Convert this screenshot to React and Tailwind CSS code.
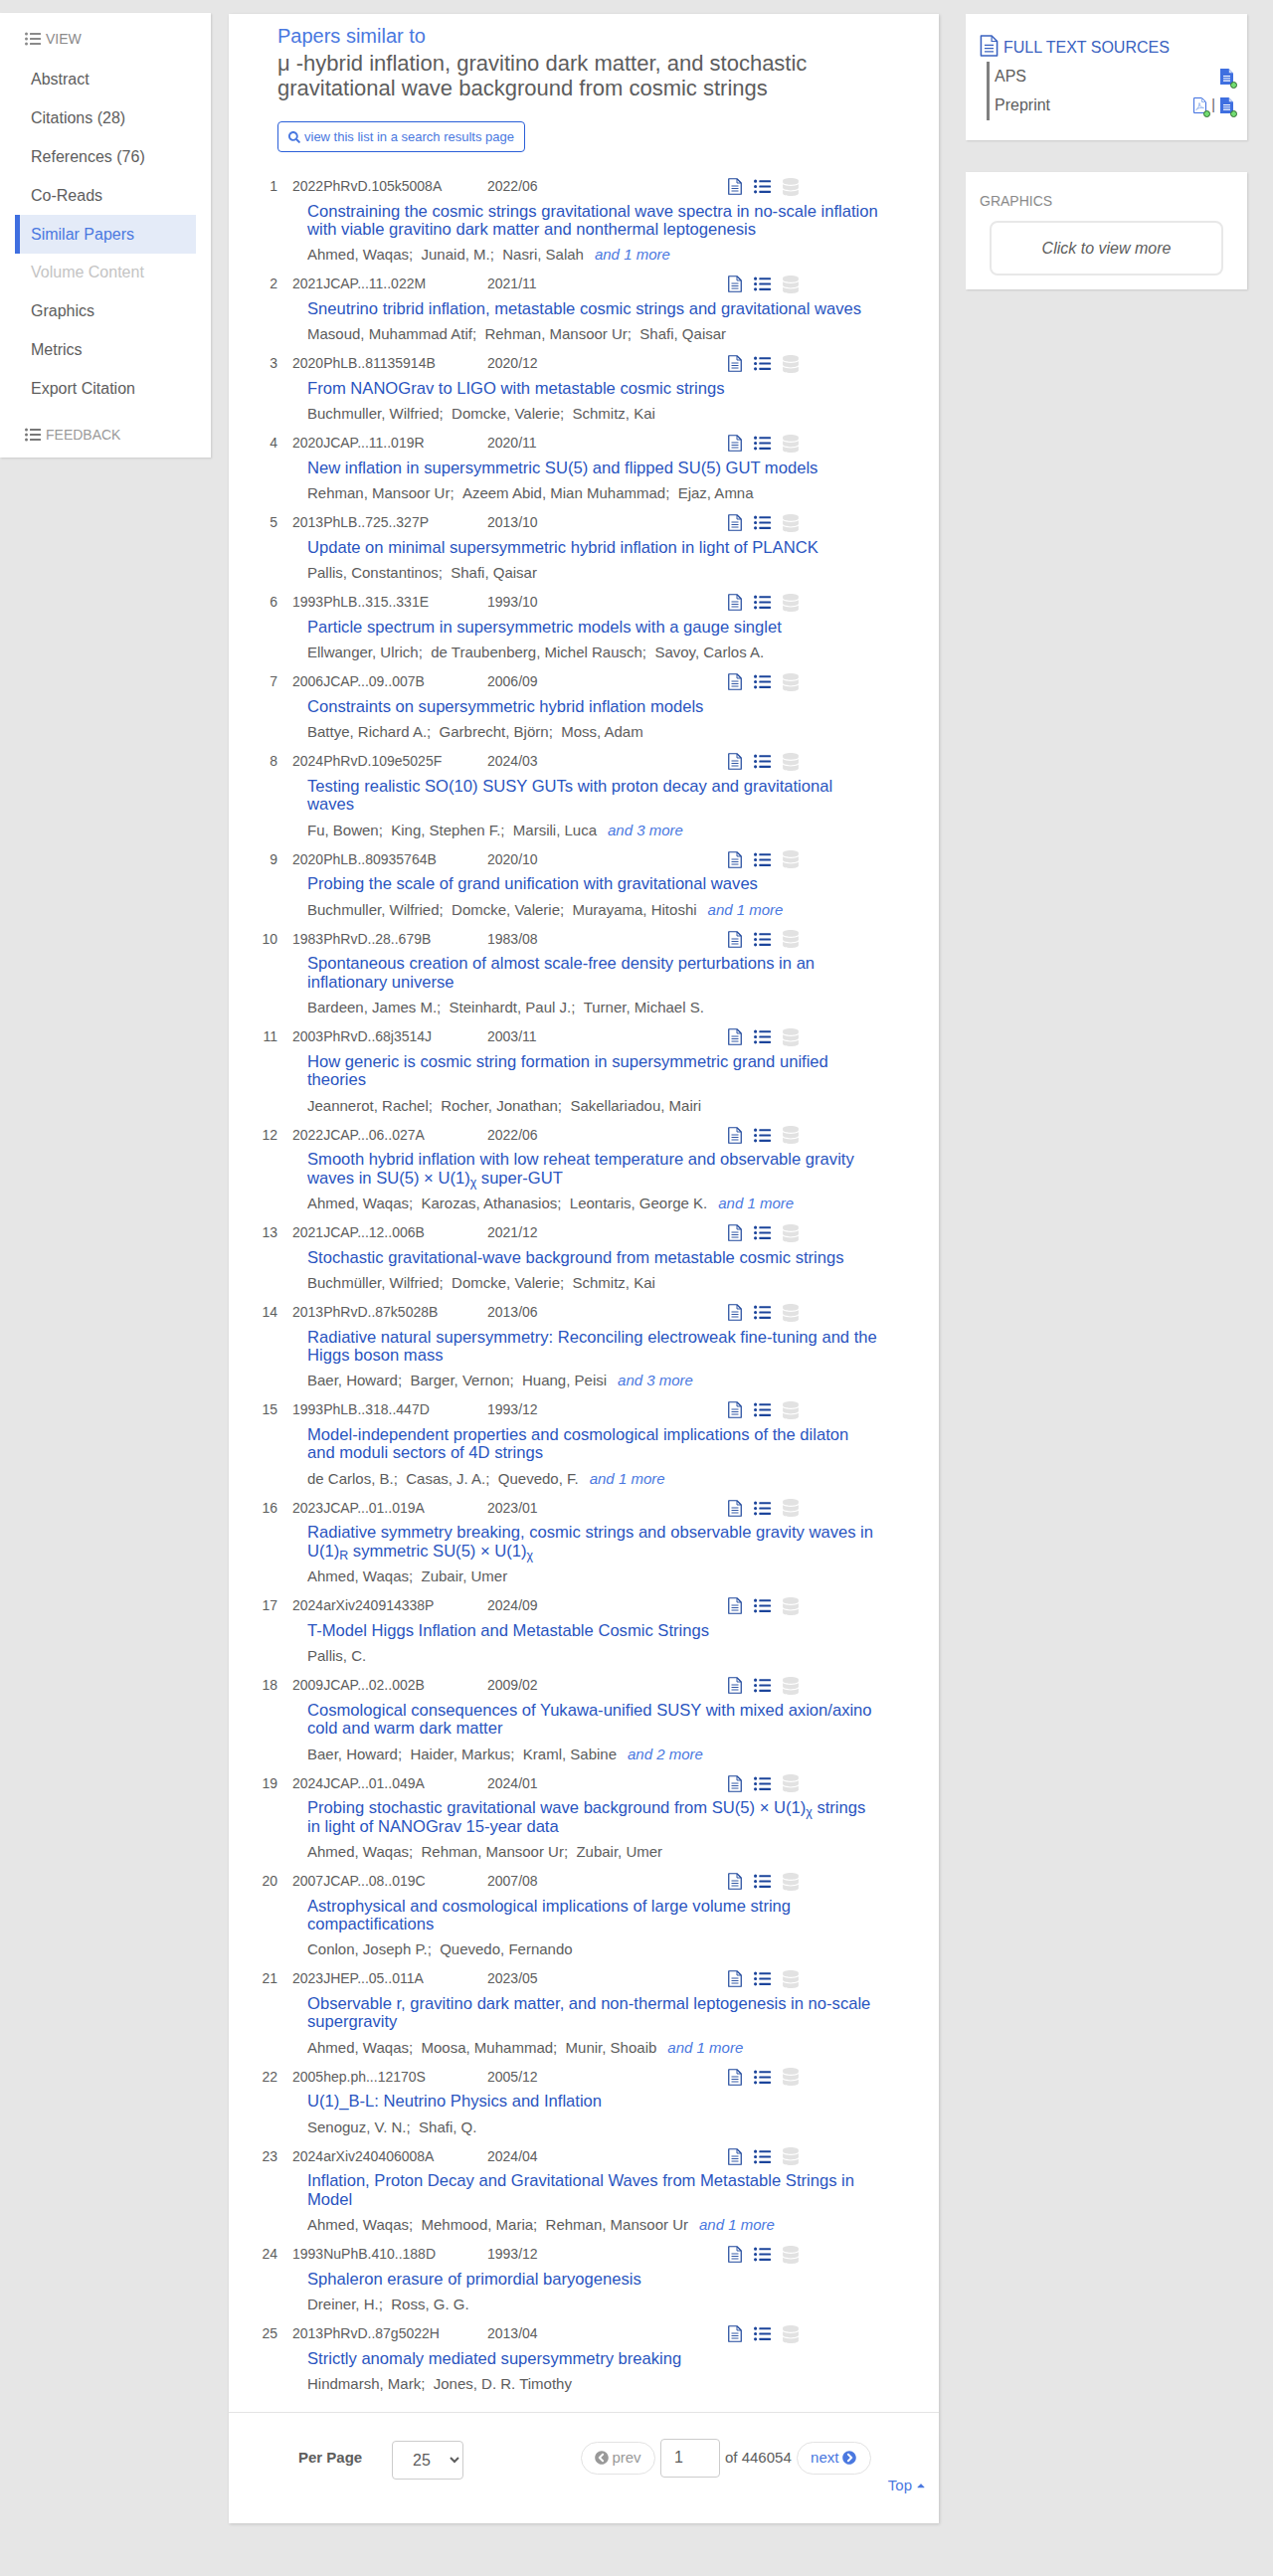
import { FaCaretUp, FaChevronCircleLeft, FaChevronCircleRight, FaDatabase, FaListUl, FaSearch } from "react-icons/fa";

const navItems = ["Abstract", "Citations (28)", "References (76)", "Co-Reads", "Similar Papers", "Volume Content", "Graphics", "Metrics", "Export Citation"];

const papers = [
  ["2022PhRvD.105k5008A", "2022/06", "Constraining the cosmic strings gravitational wave spectra in no-scale inflation with viable gravitino dark matter and nonthermal leptogenesis", ["Ahmed, Waqas", "Junaid, M.", "Nasri, Salah"], 1],
  ["2021JCAP...11..022M", "2021/11", "Sneutrino tribrid inflation, metastable cosmic strings and gravitational waves", ["Masoud, Muhammad Atif", "Rehman, Mansoor Ur", "Shafi, Qaisar"]],
  ["2020PhLB..81135914B", "2020/12", "From NANOGrav to LIGO with metastable cosmic strings", ["Buchmuller, Wilfried", "Domcke, Valerie", "Schmitz, Kai"]],
  ["2020JCAP...11..019R", "2020/11", "New inflation in supersymmetric SU(5) and flipped SU(5) GUT models", ["Rehman, Mansoor Ur", "Azeem Abid, Mian Muhammad", "Ejaz, Amna"]],
  ["2013PhLB..725..327P", "2013/10", "Update on minimal supersymmetric hybrid inflation in light of PLANCK", ["Pallis, Constantinos", "Shafi, Qaisar"]],
  ["1993PhLB..315..331E", "1993/10", "Particle spectrum in supersymmetric models with a gauge singlet", ["Ellwanger, Ulrich", "de Traubenberg, Michel Rausch", "Savoy, Carlos A."]],
  ["2006JCAP...09..007B", "2006/09", "Constraints on supersymmetric hybrid inflation models", ["Battye, Richard A.", "Garbrecht, Björn", "Moss, Adam"]],
  ["2024PhRvD.109e5025F", "2024/03", "Testing realistic SO(10) SUSY GUTs with proton decay and gravitational waves", ["Fu, Bowen", "King, Stephen F.", "Marsili, Luca"], 3],
  ["2020PhLB..80935764B", "2020/10", "Probing the scale of grand unification with gravitational waves", ["Buchmuller, Wilfried", "Domcke, Valerie", "Murayama, Hitoshi"], 1],
  ["1983PhRvD..28..679B", "1983/08", "Spontaneous creation of almost scale-free density perturbations in an inflationary universe", ["Bardeen, James M.", "Steinhardt, Paul J.", "Turner, Michael S."]],
  ["2003PhRvD..68j3514J", "2003/11", "How generic is cosmic string formation in supersymmetric grand unified theories", ["Jeannerot, Rachel", "Rocher, Jonathan", "Sakellariadou, Mairi"]],
  ["2022JCAP...06..027A", "2022/06", <>Smooth hybrid inflation with low reheat temperature and observable gravity waves in SU(5) × U(1)<sub>χ</sub> super-GUT</>, ["Ahmed, Waqas", "Karozas, Athanasios", "Leontaris, George K."], 1],
  ["2021JCAP...12..006B", "2021/12", "Stochastic gravitational-wave background from metastable cosmic strings", ["Buchmüller, Wilfried", "Domcke, Valerie", "Schmitz, Kai"]],
  ["2013PhRvD..87k5028B", "2013/06", "Radiative natural supersymmetry: Reconciling electroweak fine-tuning and the Higgs boson mass", ["Baer, Howard", "Barger, Vernon", "Huang, Peisi"], 3],
  ["1993PhLB..318..447D", "1993/12", "Model-independent properties and cosmological implications of the dilaton and moduli sectors of 4D strings", ["de Carlos, B.", "Casas, J. A.", "Quevedo, F."], 1],
  ["2023JCAP...01..019A", "2023/01", <>Radiative symmetry breaking, cosmic strings and observable gravity waves in U(1)<sub>R</sub> symmetric SU(5) × U(1)<sub>χ</sub></>, ["Ahmed, Waqas", "Zubair, Umer"]],
  ["2024arXiv240914338P", "2024/09", "T-Model Higgs Inflation and Metastable Cosmic Strings", ["Pallis, C."]],
  ["2009JCAP...02..002B", "2009/02", "Cosmological consequences of Yukawa-unified SUSY with mixed axion/axino cold and warm dark matter", ["Baer, Howard", "Haider, Markus", "Kraml, Sabine"], 2],
  ["2024JCAP...01..049A", "2024/01", <>Probing stochastic gravitational wave background from SU(5) × U(1)<sub>χ</sub> strings in light of NANOGrav 15-year data</>, ["Ahmed, Waqas", "Rehman, Mansoor Ur", "Zubair, Umer"]],
  ["2007JCAP...08..019C", "2007/08", "Astrophysical and cosmological implications of large volume string compactifications", ["Conlon, Joseph P.", "Quevedo, Fernando"]],
  ["2023JHEP...05..011A", "2023/05", "Observable r, gravitino dark matter, and non-thermal leptogenesis in no-scale supergravity", ["Ahmed, Waqas", "Moosa, Muhammad", "Munir, Shoaib"], 1],
  ["2005hep.ph...12170S", "2005/12", "U(1)_B-L: Neutrino Physics and Inflation", ["Senoguz, V. N.", "Shafi, Q."]],
  ["2024arXiv240406008A", "2024/04", "Inflation, Proton Decay and Gravitational Waves from Metastable Strings in Model", ["Ahmed, Waqas", "Mehmood, Maria", "Rehman, Mansoor Ur"], 1],
  ["1993NuPhB.410..188D", "1993/12", "Sphaleron erasure of primordial baryogenesis", ["Dreiner, H.", "Ross, G. G."]],
  ["2013PhRvD..87g5022H", "2013/04", "Strictly anomaly mediated supersymmetry breaking", ["Hindmarsh, Mark", "Jones, D. R. Timothy"]],
];

// outlined page with folded corner and three text lines
const DocIcon = ({ className = "" }) => (
  <svg viewBox="0 0 14 17" className={className} fill="none" stroke="currentColor">
    <path d="M1 .75H9L13.25 5V16.25H.75V.75Z" strokeWidth="1.2" strokeLinejoin="round" />
    <path d="M9 1V5H13" strokeWidth=".9" />
    <path d="M3.5 8H10.5M3.5 10.5H10.5M3.5 13H10.5" strokeWidth=".9" />
  </svg>
);

const SolidDoc = () => (
  <svg viewBox="0 0 13 16" className="h-[16px] w-[13px]">
    <path d="M0 0H8.5L13 4.5V16H0Z" fill="#3f6fe0" />
    <path d="M8.8 .6V4.2H12.4Z" fill="#cfdcf8" />
    <path d="M3 7.5H10M3 9.8H10M3 12.1H10" stroke="#fff" strokeWidth="1.1" />
  </svg>
);

const PdfDoc = () => (
  <svg viewBox="0 0 13 16" className="h-[16px] w-[13px]" fill="none">
    <path d="M.5.5H8.5L12.5 4.5V15.5H.5Z" stroke="#3f6fe0" />
    <path d="M8.5.5V4.5H12.5" stroke="#8fb0ee" />
    <path d="M2.5 12.5C4.5 11.5 6 8.5 6 5.5C6 8.5 8 10.5 10.5 10.5C8 10 4.5 10.5 2.5 12.5Z" stroke="#8fb0ee" strokeWidth=".9" />
  </svg>
);

const Sidebar = () => (
  <aside className="h-[447px] w-[212px] shrink-0 bg-white pl-[15px] pr-[15px] pt-[16px] shadow-[1px_1px_2px_rgba(0,0,0,0.12)]">
    <div className="flex h-[20px] items-center gap-[5px] pl-[10px] text-[14px] text-[#8a8a8a]">
      <FaListUl className="text-[16px]" /> VIEW
    </div>
    <nav className="mt-[11px]">
      {navItems.map((item) => {
        const active = item === "Similar Papers";
        const disabled = item === "Volume Content";
        return (
          <div
            key={item}
            className={`flex items-center text-[16px] ${
              active
                ? "h-[39px] border-l-[5px] border-[#3f6fe0] bg-[#e4ebf8] pl-[11px] text-[#4a78e0]"
                : disabled
                ? "h-[38px] pl-[16px] text-[#c4c4c4]"
                : "h-[39px] pl-[16px] text-[#5d5d5d]"
            }`}
          >
            {item}
          </div>
        );
      })}
    </nav>
    <div className="mt-[17px] flex h-[20px] items-center gap-[5px] pl-[10px] text-[14px] text-[#9a9a9a]">
      <FaListUl className="text-[16px] text-[#777]" /> FEEDBACK
    </div>
  </aside>
);

const PaperRow = ({ index, paper }) => {
  const [bibcode, date, title, authors, more] = paper;
  return (
    <div className="pb-[7.6px]">
      <div className="flex h-[24px] items-center text-[14px] text-[#5d5d5d]">
        <span className="w-[49px] text-right">{index}</span>
        <span className="ml-[15px] w-[196px]">{bibcode}</span>
        <span className="w-[242px]">{date}</span>
        <span className="flex items-center">
          <DocIcon className="h-[17px] w-[14px] text-[#1c459b]" />
          <FaListUl className="ml-[12px] text-[17px] text-[#1c459b]" />
          <FaDatabase className="ml-[11px] text-[18px] text-[#e2e2e2]" />
        </span>
      </div>
      <div className="ml-[79px] mt-[4px] w-[576px] text-[16.6px] leading-[18.4px] text-[#2a55c0]">{title}</div>
      <div className="ml-[79px] mt-[6px] h-[20px] text-[15px] leading-[20px] text-[#5d5d5d]">
        {authors.map((a, i) => (
          <span key={a}>
            {a}
            {i < authors.length - 1 ? ";\u00a0\u00a0" : ""}
          </span>
        ))}
        {more && <span className="ml-[11px] italic text-[#4a78e0]">and {more} more</span>}
      </div>
    </div>
  );
};

const Pager = () => (
  <div className="relative h-[112px] border-t border-[#e4e4e4]">
    <div className="flex items-start pl-[70px] pt-[26px] text-[15px] text-[#5d5d5d]">
      <span className="mt-[8px] w-[94px] font-bold">Per Page</span>
      <select defaultValue="25" className="mt-[2px] h-[39px] w-[72px] rounded border border-[#ccc] bg-white pl-[16px] text-[16px] text-[#5d5d5d]">
        <option value="25">25</option>
        <option value="50">50</option>
      </select>
      <div className="ml-[118px] flex items-center gap-[5px]">
        <span className="flex h-[33px] w-[75px] items-center justify-center gap-[3px] rounded-full border border-[#e2e2e2] text-[#999]">
          <FaChevronCircleLeft className="text-[14px]" /> prev
        </span>
        <span className="flex h-[39px] w-[60px] items-center rounded border border-[#ccc] pl-[13px] text-[16px]">1</span>
        <span>of 446054</span>
        <span className="flex h-[33px] w-[75px] items-center justify-center gap-[4px] rounded-full border border-[#e2e2e2] text-[#4a78e0]">
          next <FaChevronCircleRight className="text-[14px]" />
        </span>
      </div>
    </div>
    <span className="absolute right-[12px] top-[62px] flex items-center gap-[3px] text-[15px] text-[#4a78e0]">
      Top <FaCaretUp className="text-[12px]" />
    </span>
  </div>
);

const FileIcon = ({ pdf }) => (
  <span className="relative inline-block h-[16px] w-[13px]">
    {pdf ? <PdfDoc /> : <SolidDoc />}
    <span className="absolute left-[10px] top-[13px] h-[7px] w-[7px] rounded-full border border-[#2f6b2f] bg-[#72dc72]" />
  </span>
);

const RightColumn = () => (
  <aside className="w-[283px] shrink-0">
    <div className="h-[127px] bg-white pl-[14px] pr-[14px] pt-[20px] shadow-[1px_1px_2px_rgba(0,0,0,0.12)]">
      <div className="flex h-[23px] items-center gap-[5px] text-[16px] text-[#3a62c0]">
        <DocIcon className="h-[22px] w-[19px]" />
        <span className="mt-[4px]">FULL TEXT SOURCES</span>
      </div>
      <div className="ml-[7px] mt-[5px] h-[59px] border-l-[3px] border-[#808080] pl-[5px] text-[16px] text-[#5d5d5d]">
        <div className="flex h-[29px] items-center justify-between">
          <span>APS</span>
          <FileIcon />
        </div>
        <div className="flex h-[29px] items-center justify-between">
          <span>Preprint</span>
          <span className="flex items-center gap-[5px]">
            <FileIcon pdf />
            <span className="text-[14px]">|</span>
            <FileIcon />
          </span>
        </div>
      </div>
    </div>
    <div className="mt-[32px] h-[118px] bg-white pl-[14px] pt-[20px] shadow-[1px_1px_2px_rgba(0,0,0,0.12)]">
      <div className="text-[14px] leading-[18px] text-[#8a8a8a]">GRAPHICS</div>
      <div className="ml-[10px] mt-[11px] flex h-[55px] w-[235px] items-center justify-center rounded-lg border-2 border-[#e8e8e8] text-[16px] italic text-[#5d5d5d]">
        Click to view more
      </div>
    </div>
  </aside>
);

export default function App() {
  return (
    <div className="min-h-[2590px] bg-[#e6e6e6] font-['Liberation_Sans',Arial,sans-serif]">
      <div className="flex items-start pt-[13px]">
        <Sidebar />
        <main className="ml-[18px] mt-[1px] w-[714px] shrink-0 bg-white shadow-[1px_1px_3px_rgba(0,0,0,0.15)]">
          <div className="pl-[49px] pr-[100px] pt-[10px]">
            <div className="text-[20px] leading-[24px] text-[#4a78e0]">Papers similar to</div>
            <h1 className="mt-[4px] text-[22px] leading-[24.5px] text-[#5d5d5d]">
              μ -hybrid inflation, gravitino dark matter, and stochastic gravitational wave background from cosmic strings
            </h1>
            <div className="mt-[21px] inline-flex h-[31px] items-center gap-[4px] rounded border border-[#2a5fd8] px-[10px] text-[13px] text-[#4a78e0]">
              <FaSearch className="text-[12px]" /> view this list in a search results page
            </div>
          </div>
          <div className="pb-[10px] pt-[22.5px]">
            {papers.map((p, i) => (
              <PaperRow key={p[0]} index={i + 1} paper={p} />
            ))}
          </div>
          <Pager />
        </main>
        <div className="ml-[27px] mt-[1px]">
          <RightColumn />
        </div>
      </div>
    </div>
  );
}
